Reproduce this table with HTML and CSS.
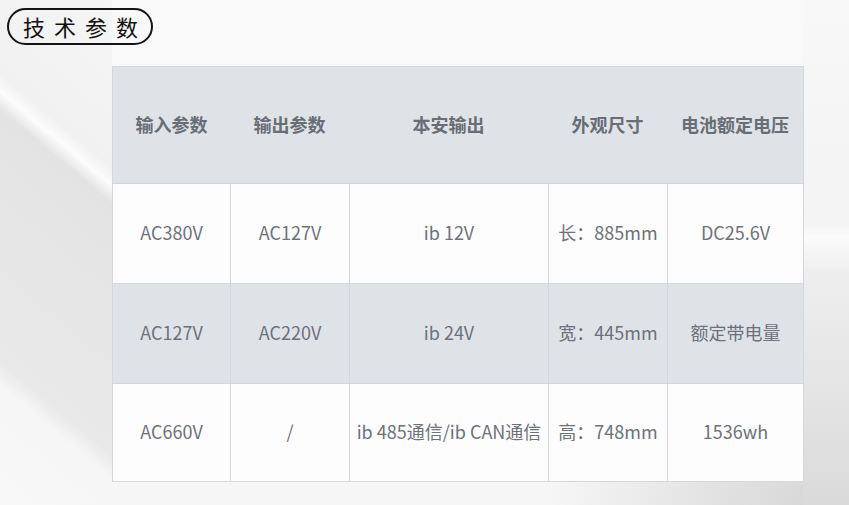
FILE: index.html
```html
<!DOCTYPE html>
<html lang="zh-CN">
<head>
<meta charset="utf-8">
<title>技术参数</title>
<link rel="stylesheet" href="styles.css">
</head>
<body>
<div class="page">
  <div class="title">技术参数</div>
  <div class="spec-table">
    <div class="cell head">输入参数</div>
    <div class="cell head">输出参数</div>
    <div class="cell head">本安输出</div>
    <div class="cell head">外观尺寸</div>
    <div class="cell head">电池额定电压</div>

    <div class="cell row-a">AC380V</div>
    <div class="cell row-a">AC127V</div>
    <div class="cell row-a">ib 12V</div>
    <div class="cell row-a">长：885mm</div>
    <div class="cell row-a">DC25.6V</div>

    <div class="cell row-b">AC127V</div>
    <div class="cell row-b">AC220V</div>
    <div class="cell row-b">ib 24V</div>
    <div class="cell row-b">宽：445mm</div>
    <div class="cell row-b">额定带电量</div>

    <div class="cell row-c">AC660V</div>
    <div class="cell row-c">/</div>
    <div class="cell row-c">ib 485通信/ib CAN通信</div>
    <div class="cell row-c">高：748mm</div>
    <div class="cell row-c">1536wh</div>
  </div>
</div>
</body>
</html>
```
FILE: styles.css
```css
html, body {
  margin: 0;
  padding: 0;
}

body {
  width: 849px;
  height: 505px;
  overflow: hidden;
  font-family: "Noto Sans CJK SC", "Noto Sans", sans-serif;
  background-color: #f6f6f6;
  background-image:
    linear-gradient(40deg, #f8f8f8 0%, #f6f6f6 20%, #e9e9e9 24%, #e6e6e6 45%, #e3e3e3 66%, #fcfcfc 69%, #f1f1f1 72%, #f5f5f5 100%),
    linear-gradient(to bottom, #f8f8f8 0%, #f3f3f3 44%, #fbfbfb 47%, #eeeeee 54%, #e4e4e4 78%, #dadada 100%),
    radial-gradient(ellipse 300px 150px at 100% 100%, #d4d4d4 0%, #e0e0e0 40%, rgba(244,244,244,0) 100%),
    linear-gradient(to bottom, #f9f9f9 0%, #f6f6f6 100%);
  background-size: 112px 505px, 46px 505px, 100% 100%, 100% 100%;
  background-repeat: no-repeat;
  background-position: 0 0, 100% 0, 0 0, 0 0;
}

.page {
  display: flex;
  flex-direction: column;
  align-items: flex-start;
  padding: 8px 0 0 7px;
}

.title {
  box-sizing: border-box;
  height: 37px;
  padding: 0 4px 0 14px;
  border: 2px solid #141414;
  border-radius: 19px;
  font-size: 22px;
  line-height: 33px;
  letter-spacing: 9px;
  color: #111;
}

.spec-table {
  margin: 21px 0 0 105px;
  display: grid;
  grid-template-columns: 117px 119px 199px 119px 136px;
  grid-template-rows: 116px 100px 100px 98px;
  border: 1px solid #d2d7e0;
}

.cell {
  display: flex;
  align-items: center;
  justify-content: center;
  padding-bottom: 3px;
  font-size: 18px;
  color: #6d717a;
  white-space: nowrap;
  box-sizing: border-box;
}

.cell.head {
  background: #dfe3e8;
  font-weight: 700;
  color: #696d75;
  padding-bottom: 2px;
}

.row-a, .row-b, .row-c {
  border-top: 1px solid #d2d7e0;
  border-left: 1px solid #d2d7e0;
}

.row-a:nth-child(5n+1), .row-b:nth-child(5n+1), .row-c:nth-child(5n+1) {
  border-left: none;
}

.row-a, .row-c {
  background: #fdfdfe;
}

.row-b {
  background: #dfe3e8;
}
```
